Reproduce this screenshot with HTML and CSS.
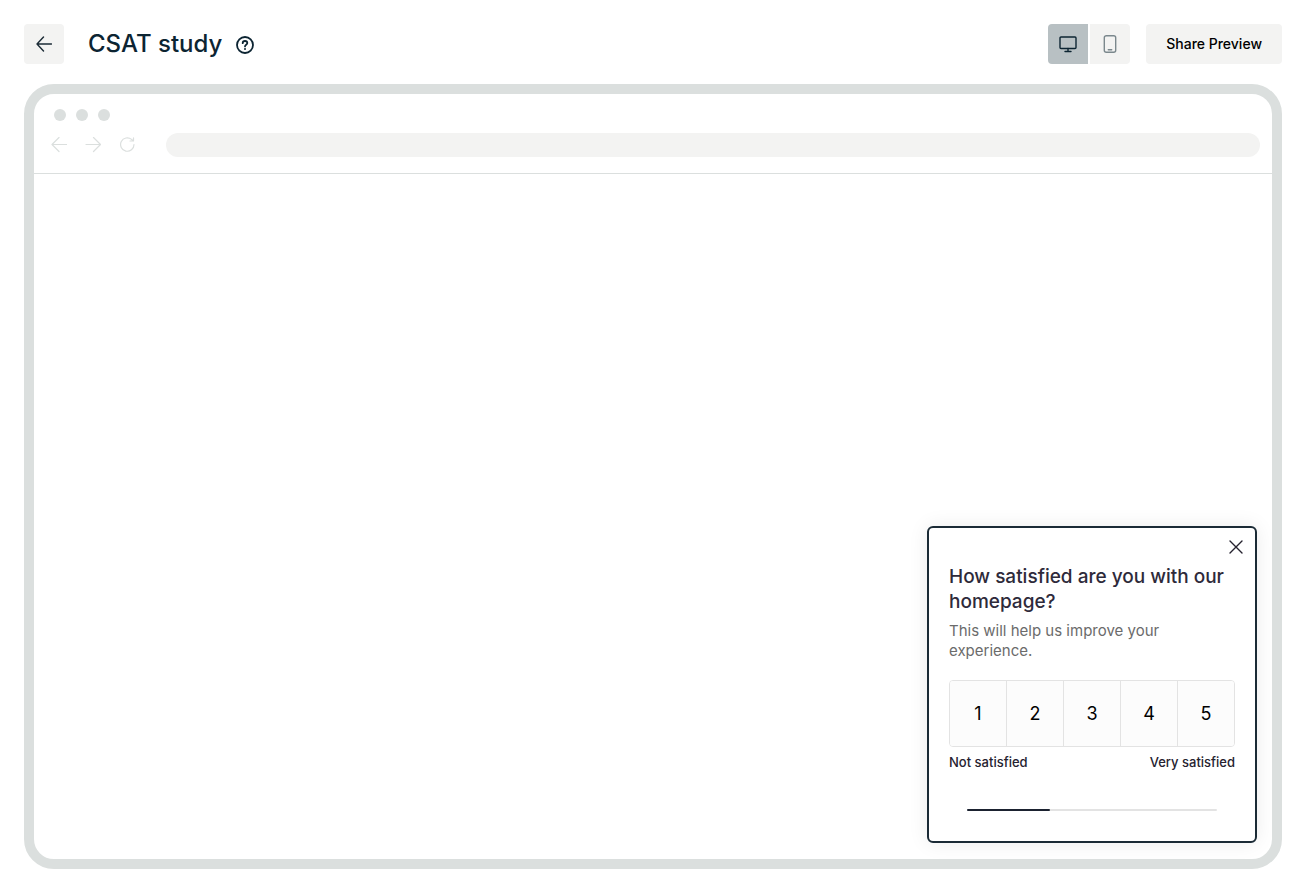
FILE: index.html
```html
<!DOCTYPE html>
<html lang="en">
<head>
    <meta charset="UTF-8">
    <meta name="viewport" content="width=device-width, initial-scale=1.0">
    <title>CSAT study</title>
    <link rel="stylesheet" href="styles.css">
</head>
<body>

<header class="topbar">
    <button class="icon-button back-button" type="button" aria-label="Back">
        <svg width="16" height="16" viewBox="0 0 16 16"><path d="M15.500 8H1M7.500 1L1 8L7.500 15"/></svg>
    </button>
    <h1>CSAT study</h1>
    <button class="help-button" type="button" aria-label="Help">
        <svg width="18" height="18" viewBox="0 0 18 18">
            <circle cx="9" cy="9" r="8"/>
            <path d="M6.700 7.200C6.700 5.800 7.700 5 9 5C10.300 5 11.300 5.800 11.300 7.100C11.300 8.700 9 8.800 9 10.400"/>
            <circle class="dot" cx="9" cy="13" r="1"/>
        </svg>
    </button>

    <div class="device-switch">
        <button class="icon-button active" type="button" aria-label="Desktop" aria-pressed="true">
            <svg width="18" height="18" viewBox="0 0 18 18"><rect x="1" y="2" width="16" height="11.500" rx="1"/><path d="M9 13.500V16.500M6 16.500H12"/></svg>
        </button>
        <button class="icon-button" type="button" aria-label="Mobile" aria-pressed="false">
            <svg width="18" height="18" viewBox="0 0 18 18"><rect x="3.300" y="0.700" width="11.400" height="16.600" rx="2"/><path d="M7.300 14.700H10.700"/></svg>
        </button>
    </div>
    <button class="share-button" type="button">Share Preview</button>
</header>

<main class="browser">
    <div class="browser-bar">
        <div class="dots"><span></span><span></span><span></span></div>
        <div class="nav">
            <svg width="16" height="16" viewBox="0 0 16 16"><path d="M15.500 7.500H1M8 0.500L1 7.500L8 14.500"/></svg>
            <svg width="16" height="16" viewBox="0 0 16 16"><path d="M1 7.500H15.500M8.500 0.500L15.500 7.500L8.500 14.500"/></svg>
            <svg width="16" height="16" viewBox="0 0 16 16"><path d="M15 7.500A6.700 6.700 0 1 1 12.600 2.400L14 3.700M14.500 0.800V4H11"/></svg>
            <div class="address"></div>
        </div>
    </div>

    <div class="viewport">
        <section class="survey">
            <button class="close-button" type="button" aria-label="Close">
                <svg width="14" height="14" viewBox="0 0 14 14"><path d="M1 1L13 13M13 1L1 13"/></svg>
            </button>
            <h2>How satisfied are you with our homepage?</h2>
            <p>This will help us improve your experience.</p>
            <div class="scale">
                <button type="button">1</button>
                <button type="button">2</button>
                <button type="button">3</button>
                <button type="button">4</button>
                <button type="button">5</button>
            </div>
            <div class="scale-labels">
                <span>Not satisfied</span>
                <span>Very satisfied</span>
            </div>
            <div class="progress"><div class="progress-fill"></div></div>
        </section>
    </div>
</main>

</body>
</html>
```
FILE: styles.css
```css
* {
    box-sizing: border-box;
}
body {
    margin: 0;
    padding: 24px 24px 11px;
    min-height: 100vh;
    display: flex;
    flex-direction: column;
    gap: 20px;
    font-family: Inter, "Liberation Sans", sans-serif;
    background-color: #fff;
}
button {
    border: none;
    padding: 0;
    font-family: inherit;
    cursor: pointer;
}
svg {
    display: block;
    fill: none;
    stroke: currentColor;
    stroke-width: 1.4;
    stroke-linecap: round;
    stroke-linejoin: round;
}

/* Top bar */
.topbar {
    display: flex;
    align-items: center;
    height: 40px;
}
.icon-button {
    display: flex;
    align-items: center;
    justify-content: center;
    width: 40px;
    height: 40px;
    background-color: #f3f3f2;
    color: #7b888d;
}
.back-button {
    border-radius: 4px;
    color: #1b2b36;
}
.topbar h1 {
    margin: 0 14px 0 24px;
    font-size: 24px;
    line-height: 40px;
    font-weight: 500;
    color: #0c2432;
}
.help-button {
    background: none;
    color: #0c2432;
    padding-top: 2px;
}
.help-button svg {
    stroke-width: 1.8;
}
.help-button .dot {
    fill: currentColor;
    stroke: none;
}
.device-switch {
    display: flex;
    gap: 2px;
    margin-left: auto;
    margin-right: 16px;
    border-radius: 4px;
    overflow: hidden;
}
.device-switch .active {
    background-color: #b8c0c3;
    color: #0c2432;
}
.share-button {
    height: 40px;
    padding: 0 20px 2px;
    border-radius: 4px;
    background-color: #f3f3f2;
    color: #000;
    font-size: 14px;
    font-weight: 500;
}

/* Browser frame */
.browser {
    flex: 1;
    display: flex;
    flex-direction: column;
    border: 10px solid #dbdfde;
    border-radius: 30px;
    overflow: hidden;
}
.browser-bar {
    padding: 15px 12px 16px 20px;
    border-bottom: 1px solid #dbdfde;
}
.dots {
    display: flex;
    gap: 10px;
}
.dots span {
    width: 12px;
    height: 12px;
    border-radius: 50%;
    background-color: #dbdfde;
}
.nav {
    display: flex;
    align-items: center;
    gap: 18px;
    margin: 12px 0 0 -3px;
    color: #dbdfde;
}
.nav svg {
    stroke-width: 1.2;
}
.address {
    flex: 1;
    height: 24px;
    margin-left: 13px;
    border-radius: 12px;
    background-color: #f3f3f2;
}
.viewport {
    flex: 1;
    display: flex;
    justify-content: flex-end;
    align-items: flex-end;
    padding: 16px 15px;
}

/* Survey widget */
.survey {
    width: 330px;
    display: flex;
    flex-direction: column;
    padding: 12px 20px 30px;
    border: 2px solid #1b2b36;
    border-radius: 6px;
    background-color: #fff;
    box-shadow: 0 0 20px rgba(0, 0, 0, 0.08);
}
.close-button {
    align-self: flex-end;
    margin-right: -8px;
    background: none;
    color: #25222f;
}
.survey h2 {
    margin: 10px 0 0;
    font-size: 19px;
    line-height: 25px;
    font-weight: 500;
    color: #2e2a3a;
}
.survey p {
    margin: 7px 0 0;
    font-size: 15px;
    line-height: 20px;
    color: #6b6b6b;
}
.scale {
    display: flex;
    margin-top: 19px;
    border: 1px solid #e3e3e3;
    border-radius: 4px;
    overflow: hidden;
}
.scale button {
    flex: 1;
    height: 65px;
    background-color: #fcfcfc;
    color: #000;
    font-size: 18px;
}
.scale button + button {
    border-left: 1px solid #e3e3e3;
}
.scale-labels {
    display: flex;
    justify-content: space-between;
    margin-top: 6px;
    font-size: 13px;
    line-height: 18px;
    font-weight: 500;
    color: #25222f;
}
.progress {
    height: 2px;
    margin: 38px 18px 0;
    border-radius: 1px;
    background-color: #e3e3e3;
}
.progress-fill {
    width: 33%;
    height: 2px;
    border-radius: 1px;
    background-color: #1b2230;
}
```
